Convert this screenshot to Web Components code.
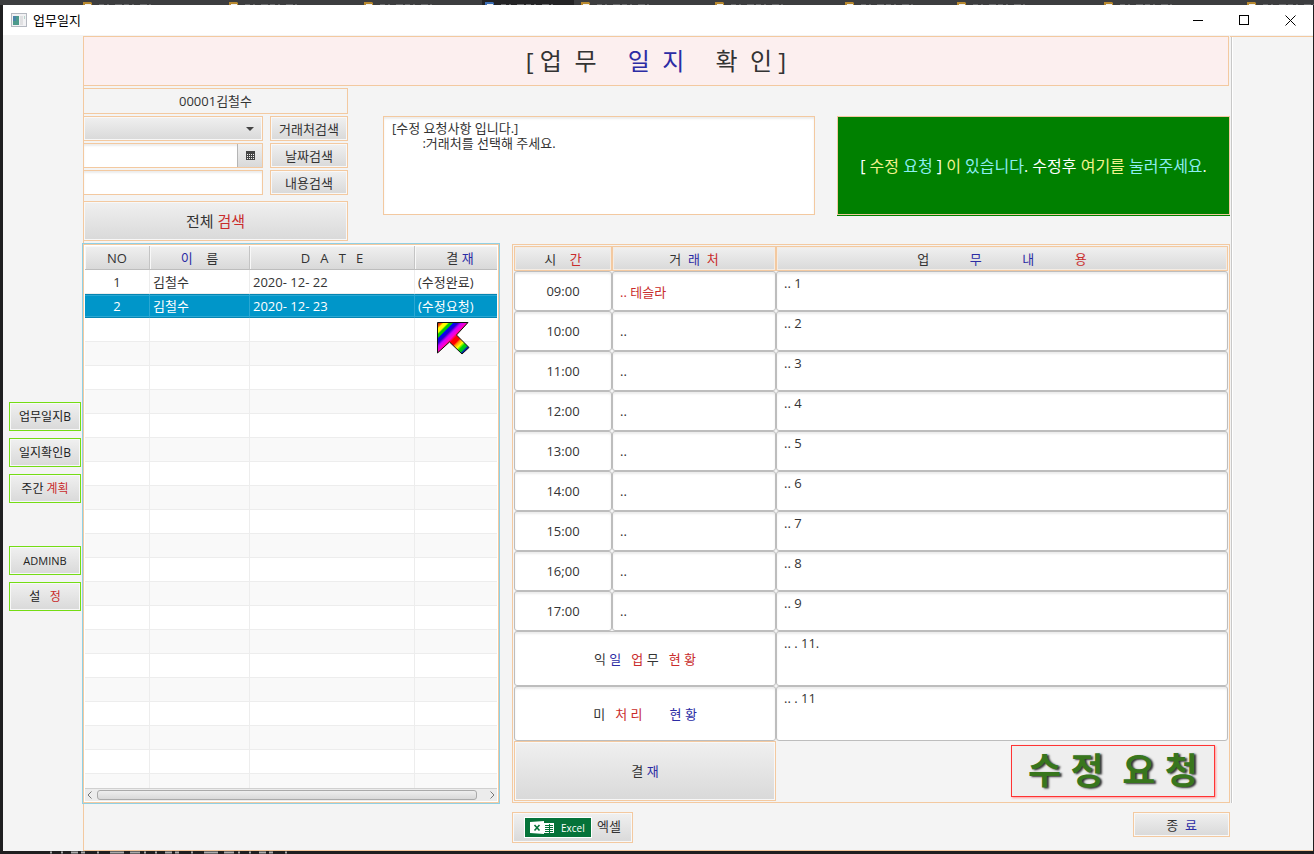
<!DOCTYPE html>
<html lang="ko">
<head>
<meta charset="utf-8">
<title>업무일지</title>
<style>
    body {
        margin: 0;
        background: #1f1f20;
        color: #333;
        font: 13px/16px "Open Sans", "Noto Sans CJK KR", sans-serif;
        --peach: #f3c9a0;
        --panel: #f4f4f4;
        --face: linear-gradient(#f0f0f0, #d9d9d9);
    }
</style>
</head>
<body>
<work-desktop></work-desktop>

<script>
const base = /*html*/`
    <style>
        * {
            box-sizing: border-box;
        }

        h1, h2, th, td {
            margin: 0;
            padding: 0;
        }

        button, input, select, textarea {
            margin: 0;
            padding: 0;
            font: inherit;
            color: inherit;
            outline: none;
            border-radius: 0;
        }

        .r {
            color: #c92c2c;
        }

        .b {
            color: #2c2ca4;
        }

        .c {
            color: #8deef2;
        }

        .y {
            color: #f2f28c;
        }
    </style>
`

// JavaFX looking button, the border colour comes from --edge
class FxButton extends HTMLElement {
    constructor() {
        super()
        this.attachShadow({mode: 'open'})
        this.shadowRoot.innerHTML = base + /*html*/`
            <style>
                :host {
                    display: block;
                }

                button {
                    display: flex;
                    justify-content: center;
                    align-items: center;
                    width: 100%;
                    height: 100%;
                    border: 1px solid var(--edge, var(--peach));
                    background: var(--face);
                    box-shadow: inset 0 0 0 1px var(--shine, #f8f8f8);
                    white-space: pre;
                }
            </style>
            <button type="button"><span><slot></slot></span></button>
        `
    }
}

class TitleBar extends HTMLElement {
    constructor() {
        super()
        this.attachShadow({mode: 'open'})
        this.shadowRoot.innerHTML = base + /*html*/`
            <style>
                :host {
                    display: flex;
                    align-items: center;
                    height: 30px;
                    background: #fff;
                    color: #000;
                }

                .icon {
                    margin: 0 6px 0 8px;
                }

                h1 {
                    flex: 1;
                    font-size: 13px;
                    font-weight: 400;
                }

                button {
                    display: grid;
                    place-items: center;
                    width: 46px;
                    height: 30px;
                    border: 0;
                    background: none;
                }
            </style>
            <svg class="icon" width="16" height="14" viewBox="0 0 16 14">
                <rect x=".5" y=".5" width="15" height="13" fill="#f2f2f4" stroke="#b4b8c0"/>
                <rect x="2" y="3" width="6" height="9" fill="#4d9a8c"/>
                <rect x="2" y="3" width="3" height="5" fill="#4a84a8"/>
                <rect x="9" y="3" width="3" height="9" fill="#e0e0e2"/>
                <rect x="13" y="3" width="1" height="3" fill="#b8d4cc"/>
            </svg>
            <h1><slot></slot></h1>
            <button type="button" aria-label="최소화"><svg width="10" height="10"><path d="M0 5.500h10" stroke="#000"/></svg></button>
            <button type="button" aria-label="최대화"><svg width="10" height="10"><rect x=".5" y=".5" width="9" height="9" fill="none" stroke="#000"/></svg></button>
            <button type="button" aria-label="닫기"><svg width="11" height="11"><path d="M.5 .5l10 10M10.500 .5l-10 10" stroke="#000"/></svg></button>
        `
    }
}

class SideMenu extends HTMLElement {
    constructor() {
        super()
        this.attachShadow({mode: 'open'})
        this.shadowRoot.innerHTML = base + /*html*/`
            <style>
                :host {
                    display: block;
                    width: 80px;
                    padding: 366px 2px 0 6px;
                    font-size: 12px;
                    color: #222;
                    --edge: #74dc14;
                }

                nav {
                    display: grid;
                    grid-auto-rows: 29px;
                    gap: 7px;
                }

                nav + nav {
                    margin-top: 43px;
                }

                .latin {
                    font-size: 11px;
                }
            </style>
            <nav>
                <fx-button>업무일지B</fx-button>
                <fx-button>일지확인B</fx-button>
                <fx-button>주간 <span class="r">계획</span></fx-button>
            </nav>
            <nav>
                <fx-button class="latin">ADMINB</fx-button>
                <fx-button>설   <span class="r">정</span></fx-button>
            </nav>
        `
    }
}

class SearchForm extends HTMLElement {
    constructor() {
        super()
        this.attachShadow({mode: 'open'})
        this.shadowRoot.innerHTML = base + /*html*/`
            <style>
                :host {
                    display: block;
                }

                .user {
                    height: 26px;
                    line-height: 24px;
                    border: 1px solid var(--peach);
                    text-align: center;
                }

                .fields {
                    display: grid;
                    grid-template-columns: 1fr 78px;
                    grid-auto-rows: 25px;
                    gap: 2px 7px;
                    margin: 2px 0 6px;
                }

                .field {
                    display: flex;
                    min-width: 0;
                    border: 1px solid var(--peach);
                    background: #fff;
                    box-shadow: inset 0 2px 2px #ececec;
                }

                input, select {
                    flex: 1;
                    min-width: 0;
                    border: 0;
                    padding: 0 6px;
                    background: none;
                }

                select {
                    appearance: none;
                }

                .combo {
                    align-items: center;
                    padding-right: 8px;
                    background: var(--face);
                    box-shadow: inset 0 0 0 1px #f8f8f8;
                }

                .cal {
                    display: grid;
                    place-items: center;
                    width: 25px;
                    border: 0;
                    border-left: 1px solid #b5b5b5;
                    background: var(--face);
                }

                .all {
                    height: 40px;
                    font-size: 15px;
                }
            </style>
            <div class="user">00001김철수</div>
            <div class="fields">
                <div class="field combo">
                    <select aria-label="거래처"><option></option></select>
                    <svg width="8" height="4"><path d="M0 0h8L4 4z" fill="#444"/></svg>
                </div>
                <fx-button>거래처검색</fx-button>
                <div class="field">
                    <input type="text" aria-label="날짜">
                    <button class="cal" type="button" aria-label="달력">
                        <svg width="9" height="9">
                            <rect width="9" height="9" fill="#444"/>
                            <path d="M1 3.500h7M1 5.500h7M1 7.500h7" stroke="#eee" stroke-dasharray="1 1"/>
                        </svg>
                    </button>
                </div>
                <fx-button>날짜검색</fx-button>
                <div class="field"><input type="text" aria-label="내용"></div>
                <fx-button>내용검색</fx-button>
            </div>
            <fx-button class="all">전체 <span class="r">검색</span></fx-button>
        `
    }
}

class LogList extends HTMLElement {
    constructor() {
        super()
        this.attachShadow({mode: 'open'})
        const logs = [
            ['1', '김철수', '2020- 12- 22', '(수정완료)'],
            ['2', '김철수', '2020- 12- 23', '(수정요청)'],
        ]
        const rows = []
        for (let i = 0; i < 22; i++) {
            const cells = logs[i] || ['', '', '', '']
            const picked = i === 1 ? 'class="picked"' : ''
            rows.push(`<tr ${picked}>${cells.map(c => `<td>${c}</td>`).join('')}</tr>`)
        }
        this.shadowRoot.innerHTML = base + /*html*/`
            <style>
                :host {
                    display: block;
                    position: relative;
                    width: 416px;
                    padding: 1px;
                    border: 1px solid var(--peach);
                    box-shadow: 0 0 0 1px #90d0e4;
                    background: #fff;
                }

                table {
                    width: 100%;
                    table-layout: fixed;
                    border-collapse: separate;
                    border-spacing: 0;
                    white-space: pre;
                }

                th {
                    height: 24px;
                    font-weight: 400;
                    background: var(--face);
                    border-right: 1px solid #c4c4c4;
                    border-bottom: 1px solid #bdbdbd;
                    box-shadow: inset 1px 1px #f8f8f8;
                }

                th:last-child {
                    border-right: 0;
                    padding-left: 8px;
                }

                td {
                    height: 24px;
                    padding: 0 3px;
                    border-right: 1px solid #ededed;
                    border-bottom: 1px solid #ededed;
                }

                td:first-child {
                    text-align: center;
                }

                td:last-child {
                    border-right: 0;
                }

                tbody tr:nth-child(even) {
                    background: #f9f9f9;
                }

                tbody tr:last-child td {
                    height: 14px;
                    border-bottom: 0;
                }

                tbody tr.picked {
                    background: #0096c9;
                    color: #fff;
                }

                .picked td {
                    border-color: #0585b2;
                    border-right-color: #2aa7d3;
                    box-shadow: inset 0 1px #0585b2, inset 0 2px #2aa7d3, inset 0 -1px #2aa7d3;
                }

                .scroll {
                    display: flex;
                    align-items: center;
                    height: 13px;
                    padding: 0 2px;
                    gap: 5px;
                    border-top: 1px solid #d0d0d0;
                    background: #ececec;
                }

                .thumb {
                    flex: 1;
                    height: 10px;
                    margin-right: 8px;
                    border: 1px solid #aaa;
                    border-radius: 3px;
                    background: linear-gradient(#eee, #d9d9d9);
                }

                .pointer {
                    position: absolute;
                    left: 353px;
                    top: 77px;
                }
            </style>
            <table>
                <colgroup><col style="width:65px"><col style="width:100px"><col style="width:165px"><col></colgroup>
                <thead>
                    <tr>
                        <th>NO</th>
                        <th><span class="b">이</span>    름</th>
                        <th>D   A   T   E</th>
                        <th>결 <span class="b">재</span></th>
                    </tr>
                </thead>
                <tbody>${rows.join('')}</tbody>
            </table>
            <div class="scroll">
                <svg width="5" height="8"><path d="M4.500 .5L1 4l3.500 3.500" fill="none" stroke="#777"/></svg>
                <div class="thumb"></div>
                <svg width="5" height="8"><path d="M.5 .5L4 4L.5 7.500" fill="none" stroke="#777"/></svg>
            </div>
            <svg class="pointer" width="34" height="34">
                <defs>
                    <linearGradient id="rainbow" gradientUnits="userSpaceOnUse" x1="0" y1="0" x2="32" y2="32">
                        <stop offset=".02" stop-color="#900"/>
                        <stop offset=".09" stop-color="#f60"/>
                        <stop offset=".12" stop-color="#ff0"/>
                        <stop offset=".18" stop-color="#ff0"/>
                        <stop offset=".21" stop-color="#0c0"/>
                        <stop offset=".25" stop-color="#0c0"/>
                        <stop offset=".28" stop-color="#00f"/>
                        <stop offset=".34" stop-color="#20c"/>
                        <stop offset=".4" stop-color="#c0f"/>
                        <stop offset=".47" stop-color="#f0c"/>
                        <stop offset=".53" stop-color="#f00"/>
                        <stop offset=".61" stop-color="#f00"/>
                        <stop offset=".65" stop-color="#f90"/>
                        <stop offset=".72" stop-color="#ff0"/>
                        <stop offset=".78" stop-color="#0d0"/>
                        <stop offset=".84" stop-color="#0b3"/>
                        <stop offset=".88" stop-color="#00c"/>
                    </linearGradient>
                </defs>
                <path d="M.5 .5H31L19.500 13L32 25.500L25 32L12.500 20L.5 31z" fill="url(#rainbow)" stroke="#111"/>
            </svg>
        `
    }
}

class DiarySheet extends HTMLElement {
    constructor() {
        super()
        this.attachShadow({mode: 'open'})
        const hours = ['09:00', '10:00', '11:00', '12:00', '13:00', '14:00', '15:00', '16;00', '17:00']
        const rows = hours.map((hour, i) => `
            <tr>
                <td><div class="cell">${hour}</div></td>
                <td><input class="cell ${i ? '' : 'r'}" type="text" aria-label="${hour} 거래처" value="${i ? '..' : '.. 테슬라'}"></td>
                <td><textarea class="cell" aria-label="${hour} 업무내용">.. ${i + 1}</textarea></td>
            </tr>
        `)
        this.shadowRoot.innerHTML = base + /*html*/`
            <style>
                :host {
                    display: block;
                    flex: 1;
                    min-width: 0;
                    padding: 1px;
                    border: 1px solid var(--peach);
                }

                table {
                    width: 100%;
                    table-layout: fixed;
                    border-collapse: separate;
                    border-spacing: 0;
                    white-space: pre;
                }

                th {
                    height: 25px;
                    font-weight: 400;
                    background: var(--face);
                    border: 1px solid var(--peach);
                    box-shadow: inset 0 0 0 1px #f4ece4;
                }

                .cell {
                    display: block;
                    width: 100%;
                    height: 40px;
                    padding: 0 7px;
                    border: 1px solid #bdbdbd;
                    border-radius: 3px;
                    background: #fff;
                    box-shadow: inset 0 2px 2px #ececec;
                }

                div.cell {
                    display: grid;
                    place-items: center;
                }

                textarea.cell {
                    padding-top: 3px;
                    resize: none;
                    overflow: hidden;
                }

                .tall .cell {
                    height: 55px;
                }

                .sign {
                    display: grid;
                    grid-template-columns: 262px 1fr;
                    height: 60px;
                }

                .stamp {
                    justify-self: end;
                    align-self: center;
                    display: grid;
                    place-items: center;
                    width: 204px;
                    height: 52px;
                    margin-right: 13px;
                    border: 1px solid #f33;
                    background: #eee;
                    box-shadow: 1px 1px 2px #f99;
                    color: #38761d;
                    font-size: 36px;
                    font-weight: 700;
                    line-height: 40px;
                    white-space: pre;
                    text-shadow: 2px 1px 2px #333;
                }
            </style>
            <table>
                <colgroup><col style="width:98px"><col style="width:164px"><col></colgroup>
                <thead>
                    <tr>
                        <th>시    <span class="r">간</span></th>
                        <th>거  <span class="b">래</span>  <span class="r">처</span></th>
                        <th>업            <span class="b">무</span>            <span class="b">내</span>            <span class="r">용</span></th>
                    </tr>
                </thead>
                <tbody>
                    ${rows.join('')}
                    <tr class="tall">
                        <td colspan="2"><div class="cell"><span>익 <span class="b">일</span>   <span class="r">업</span> 무   <span class="r">현 황</span></span></div></td>
                        <td><textarea class="cell" aria-label="익일 업무 현황">.. . 11.</textarea></td>
                    </tr>
                    <tr class="tall">
                        <td colspan="2"><div class="cell"><span>미   <span class="r">처 리</span>        <span class="b">현 황</span></span></div></td>
                        <td><textarea class="cell" aria-label="미처리 현황">.. . 11</textarea></td>
                    </tr>
                </tbody>
            </table>
            <div class="sign">
                <fx-button>결 <span class="b">재</span></fx-button>
                <div class="stamp">수 정  요 청</div>
            </div>
        `
    }
}

class DiaryPage extends HTMLElement {
    constructor() {
        super()
        this.attachShadow({mode: 'open'})
        this.shadowRoot.innerHTML = base + /*html*/`
            <style>
                :host {
                    display: flex;
                    flex-direction: column;
                    flex: 1;
                    min-width: 0;
                    padding-bottom: 8px;
                    box-shadow: inset 1px 0 var(--peach), inset 0 -1px var(--peach);
                }

                h2 {
                    height: 50px;
                    margin-bottom: 2px;
                    margin-right: 1px;
                    border: 1px solid var(--peach);
                    background: #fcefef;
                    font-size: 24px;
                    font-weight: 400;
                    line-height: 48px;
                    text-align: center;
                    white-space: pre;
                }

                .top {
                    display: grid;
                    grid-template-columns: 265px 445fr 393fr;
                    column-gap: 22px;
                    margin-bottom: 3px;
                }

                .memo {
                    min-width: 0;
                    height: 99px;
                    margin: 28px 0 0 13px;
                    padding: 4px 8px;
                    border: 1px solid var(--peach);
                    background: #fff;
                    box-shadow: inset 0 2px 2px #ececec;
                    line-height: 15px;
                    resize: none;
                }

                .fix {
                    min-width: 0;
                    height: 100px;
                    margin-top: 28px;
                    color: #fff;
                    font-size: 16px;
                    border-bottom: 1px solid #008000;
                    --face: #008000;
                    --shine: #008000;
                }

                .tables {
                    display: flex;
                    gap: 13px;
                }

                .foot {
                    display: flex;
                    justify-content: space-between;
                    align-items: flex-start;
                    margin: 9px 0 0 429px;
                }

                .excel {
                    width: 121px;
                    height: 31px;
                }

                .logo {
                    display: inline-flex;
                    align-items: center;
                    gap: 6px;
                    width: 68px;
                    height: 21px;
                    margin-right: 5px;
                    padding-left: 5px;
                    border: 1px solid #fff;
                    background: #057339;
                    color: #fff;
                    font-size: 10px;
                    vertical-align: middle;
                }

                .quit {
                    width: 97px;
                    height: 25px;
                }
            </style>
            <h2>[ 업  무     <span class="b">일  지</span>     확  인 ]</h2>
            <div class="top">
                <search-form></search-form>
                <textarea class="memo" aria-label="수정 요청사항">[수정 요청사항 입니다.]
         :거래처를 선택해 주세요.</textarea>
                <fx-button class="fix">[ <span class="y">수정</span> <span class="c">요청</span> ] <span class="y">이</span> <span class="c">있습니다</span>. 수정후 <span class="y">여기를</span> <span class="c">눌러주세요</span>.</fx-button>
            </div>
            <div class="tables">
                <log-list></log-list>
                <diary-sheet></diary-sheet>
            </div>
            <div class="foot">
                <fx-button class="excel"><span class="logo"><svg width="25" height="13">
                    <path d="M12 2h12v10H12z" fill="#fff"/>
                    <path d="M15 4.500h8M15 6.500h8M15 8.500h8M15 10.500h8M19.500 3v9" stroke="#057339"/>
                    <path d="M0 1l14-1v13L0 12z" fill="#fff"/>
                    <path d="M4.500 4l5 5.500M9.500 4l-5 5.500" stroke="#057339" stroke-width="1.600"/>
                </svg>Excel</span>엑셀</fx-button>
                <fx-button class="quit">종  <span class="b">료</span></fx-button>
            </div>
        `
    }
}

class WorkDesktop extends HTMLElement {
    constructor() {
        super()
        this.attachShadow({mode: 'open'})
        // editor tabs that peek out above the window
        const tabs = [83, 229, 364, 485, 581, 715, 845, 957, 1104, 1247].map((x, i) => `
            <path d="M${x} 2h8l1 1v2h-9z" fill="${i === 3 ? '#3d6fb5' : '#b8892f'}"/>
            <path d="M${x + 2} 4h6v1h-6z" fill="#eee"/>
            <path d="M${x + 16} 4.500h52" stroke="#6a6b6d" stroke-dasharray="5 3 2 6 7 2"/>
        `)
        this.shadowRoot.innerHTML = base + /*html*/`
            <style>
                :host {
                    display: flex;
                    flex-direction: column;
                    min-height: 100vh;
                }

                .tabs, .code {
                    display: block;
                    width: 100%;
                }

                .tabs {
                    height: 5px;
                    background: #3c3d3f;
                }

                .code {
                    height: 3px;
                }

                .window {
                    flex: 1;
                    display: flex;
                    flex-direction: column;
                    margin: 0 1px 0 3px;
                    background: var(--panel);
                }

                .body {
                    flex: 1;
                    display: flex;
                    margin-top: 1px;
                }

                .rail {
                    width: 83px;
                    padding-left: 1px;
                    border-top: 1px solid var(--peach);
                    border-bottom: 1px solid var(--peach);
                }

                .line {
                    width: 2px;
                    height: 766px;
                    border-left: 1px solid #c8c8c8;
                    background: #fff;
                }
            </style>
            <svg class="tabs"><rect x="482" width="92" height="5" fill="#232325"/>${tabs.join('')}</svg>
            <div class="window">
                <title-bar>업무일지</title-bar>
                <div class="body">
                    <side-menu></side-menu>
                    <diary-page></diary-page>
                    <div class="rail"><div class="line"></div></div>
                </div>
            </div>
            <svg class="code"><path d="M50 1.500h246" stroke="#aaa" stroke-width="2" stroke-dasharray="2 9 2 8 7 3 4 12 2 11 14 6 10 4"/></svg>
        `
    }
}

customElements.define('fx-button', FxButton)
customElements.define('title-bar', TitleBar)
customElements.define('side-menu', SideMenu)
customElements.define('search-form', SearchForm)
customElements.define('log-list', LogList)
customElements.define('diary-sheet', DiarySheet)
customElements.define('diary-page', DiaryPage)
customElements.define('work-desktop', WorkDesktop)
</script>
</body>
</html>
